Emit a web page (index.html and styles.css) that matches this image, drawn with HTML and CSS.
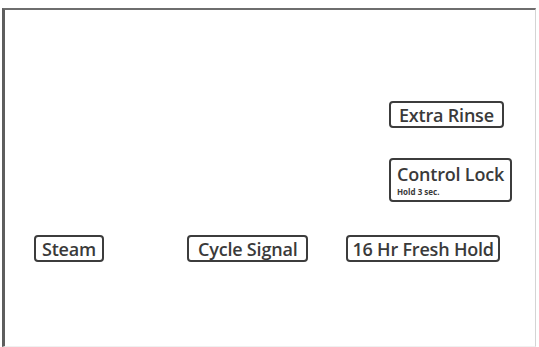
FILE: index.html
```html
<!DOCTYPE html>
<html lang="en">
  <head>
    <meta charset="UTF-8" />
    <meta name="viewport" content="width=device-width, initial-scale=1.0" />
    <title>Washer Options</title>
    <link rel="stylesheet" href="styles.css">
  </head>
  <body>
    <div class="panel">
      <div class="side">
        <div class="key key-rinse">Extra Rinse</div>
        <div class="key key-lock">
          <span>Control Lock</span>
          <small>Hold 3 sec.</small>
        </div>
      </div>
      <div class="row">
        <div class="key key-steam">Steam</div>
        <div class="key key-signal">Cycle Signal</div>
        <div class="key key-hold">16 Hr Fresh Hold</div>
      </div>
    </div>
  </body>
</html>
```

FILE: styles.css
```css
* {
  box-sizing: border-box;
}

body {
  margin: 0;
  padding: 0;
  background: #fff;
  font-family: "Open Sans", "Noto Sans", sans-serif;
  height: 347px;
  overflow: hidden;
}

.panel {
  margin: 8px 3px 0 2px;
  height: 339px;
  border-top: 2px solid #6e6e6e;
  border-left: 3px solid #5e5e5e;
  border-right: 1px solid #d4d4d4;
  border-bottom: 1px solid #f0f0f0;
}

.side {
  display: flex;
  flex-direction: column;
  align-items: flex-start;
  gap: 30px;
  padding: 91px 0 0 384px;
}

.key {
  display: inline-flex;
  flex-direction: column;
  justify-content: center;
  height: 27px;
  padding: 0 6px;
  border: 2px solid #3c3c3c;
  border-radius: 4px;
  color: #3a3a3a;
  font-size: 18px;
  font-weight: 600;
  letter-spacing: -0.2px;
  line-height: 1;
  white-space: nowrap;
}

.key-rinse {
  padding: 0 8px;
}

.key-lock {
  height: 44px;
  align-items: flex-start;
  padding-top: 1px;
}

.key-lock small {
  font-size: 8px;
  font-weight: 700;
  letter-spacing: 0;
  line-height: 9px;
  margin-top: 4px;
}

.row {
  display: flex;
  align-items: flex-start;
  padding: 33px 0 0 29px;
}

.key-steam {
  margin-right: 83px;
}

.key-signal {
  padding: 0 9px;
  margin-right: 38px;
}

.key-hold {
  padding: 0 4px;
}
```
